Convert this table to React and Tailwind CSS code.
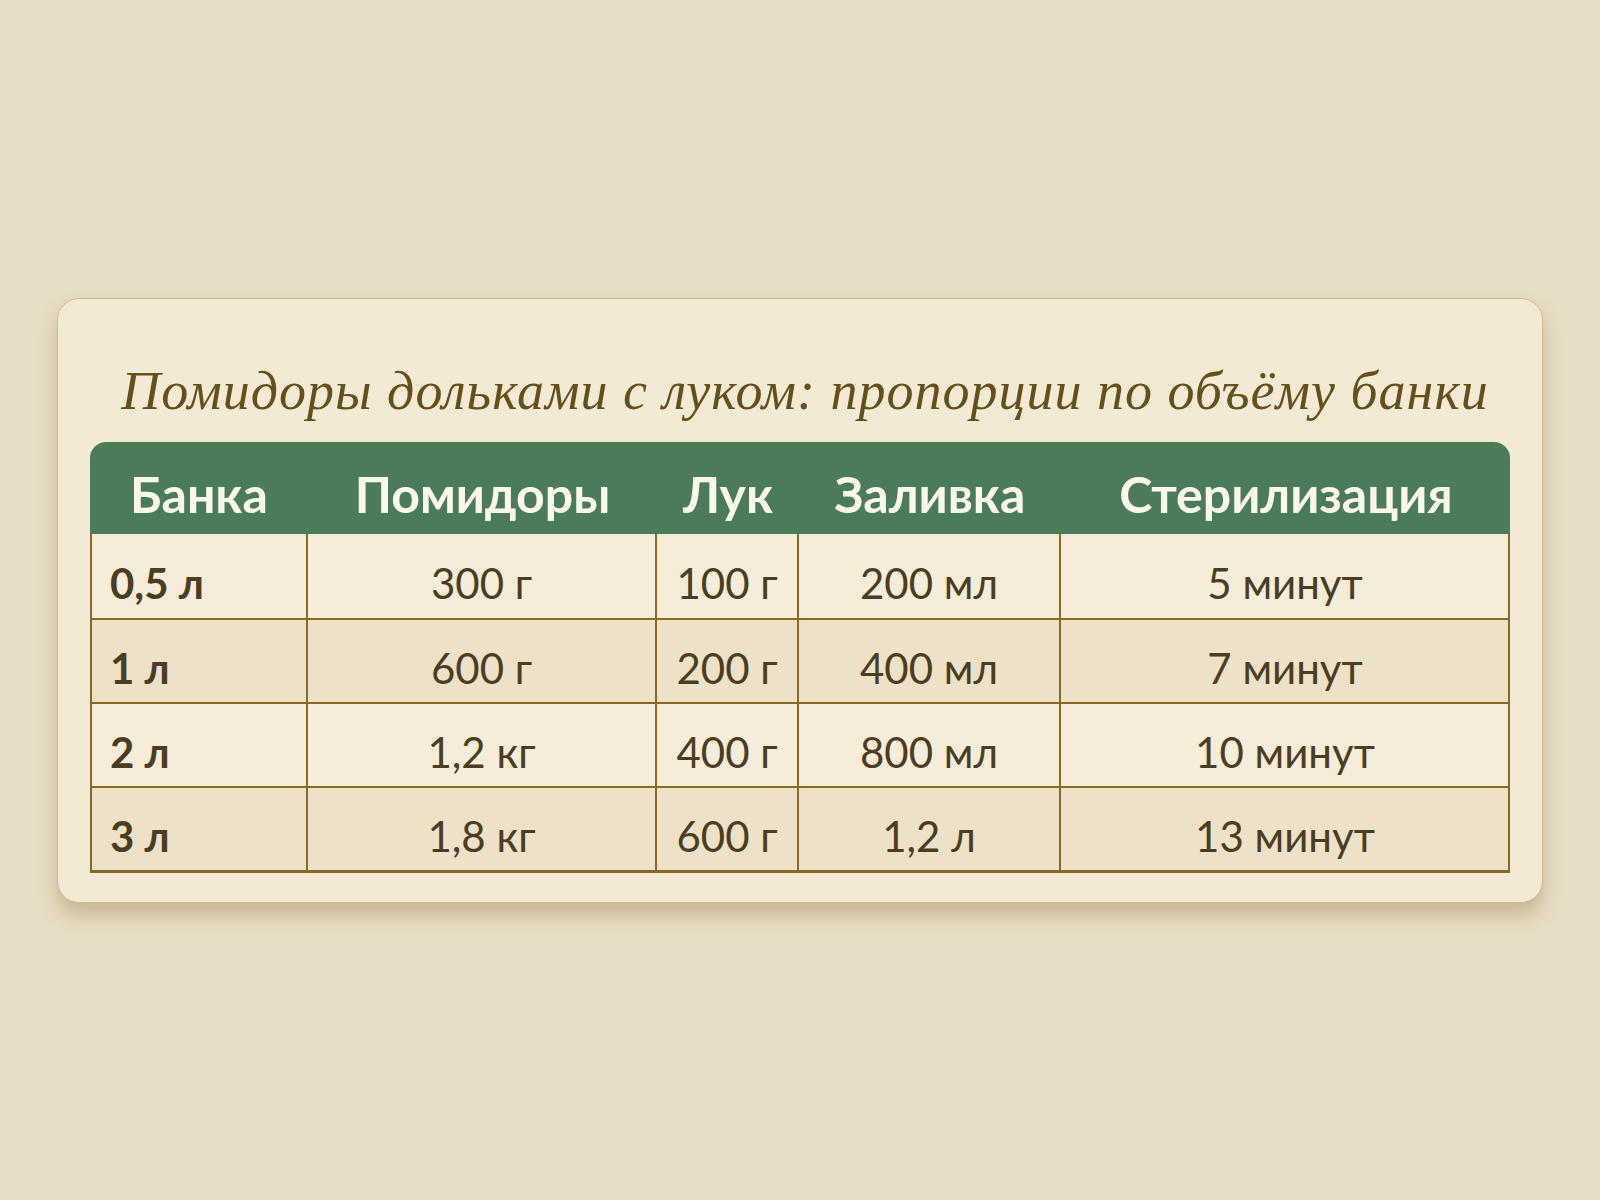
import React from 'react';

const rows = [
  { jar: '0,5 л', tomatoes: '300 г', onion: '100 г', brine: '200 мл', time: '5 минут' },
  { jar: '1 л', tomatoes: '600 г', onion: '200 г', brine: '400 мл', time: '7 минут' },
  { jar: '2 л', tomatoes: '1,2 кг', onion: '400 г', brine: '800 мл', time: '10 минут' },
  { jar: '3 л', tomatoes: '1,8 кг', onion: '600 г', brine: '1,2 л', time: '13 минут' },
];

const headers = ['Банка', 'Помидоры', 'Лук', 'Заливка', 'Стерилизация'];

const App = () => {
  return (
    <div className="w-full h-[1200px] flex items-center justify-center bg-[#e7ddc4]">
      <div className="w-[1486px] h-[605px] rounded-[22px] border border-[#cdbb8c] bg-[#f3ead6] shadow-[0_12px_18px_rgba(140,115,60,0.35)] px-[32px] pt-[62px]">
        {/* Title */}
        <h1 className="whitespace-nowrap text-center italic text-[#65501a] text-[54px] leading-[60px] tracking-[1px] pl-[10px] font-['Liberation_Serif',serif]">
          Помидоры дольками с луком: пропорции по объёму банки
        </h1>

        {/* Table */}
        <div className="mt-[21px] font-['Lato','Noto_Sans',sans-serif]">
          <div className="grid grid-cols-[218px_349px_142px_262px_450px] h-[92px] rounded-t-[16px] bg-[#4a7c5a] text-[#fbf8ea] text-[50px] font-bold">
            {headers.map((h) => (
              <div key={h} className="flex items-center justify-center pt-[13px]">{h}</div>
            ))}
          </div>
          <div className="border-2 border-t-0 border-b-[3px] border-[#8a6a22]">
            {rows.map((r, i) => (
              <div
                key={r.jar}
                className={`grid grid-cols-[216px_349px_142px_262px_448px] h-[84px] text-[#4a3d22] text-[42px] ${i > 0 ? 'border-t-2 border-[#8a6a22]' : ''} ${i % 2 === 0 ? 'bg-[#f5ecd9]' : 'bg-[#ede1c8]'}`}
              >
                <div className="flex items-center pl-[18px] pt-[16px] font-bold border-r-2 border-[#8a6a22]">{r.jar}</div>
                <div className="flex items-center justify-center pt-[16px] border-r-2 border-[#8a6a22]">{r.tomatoes}</div>
                <div className="flex items-center justify-center pt-[16px] border-r-2 border-[#8a6a22]">{r.onion}</div>
                <div className="flex items-center justify-center pt-[16px] border-r-2 border-[#8a6a22]">{r.brine}</div>
                <div className="flex items-center justify-center pt-[16px]">{r.time}</div>
              </div>
            ))}
          </div>
        </div>
      </div>
    </div>
  );
};

export default App;
